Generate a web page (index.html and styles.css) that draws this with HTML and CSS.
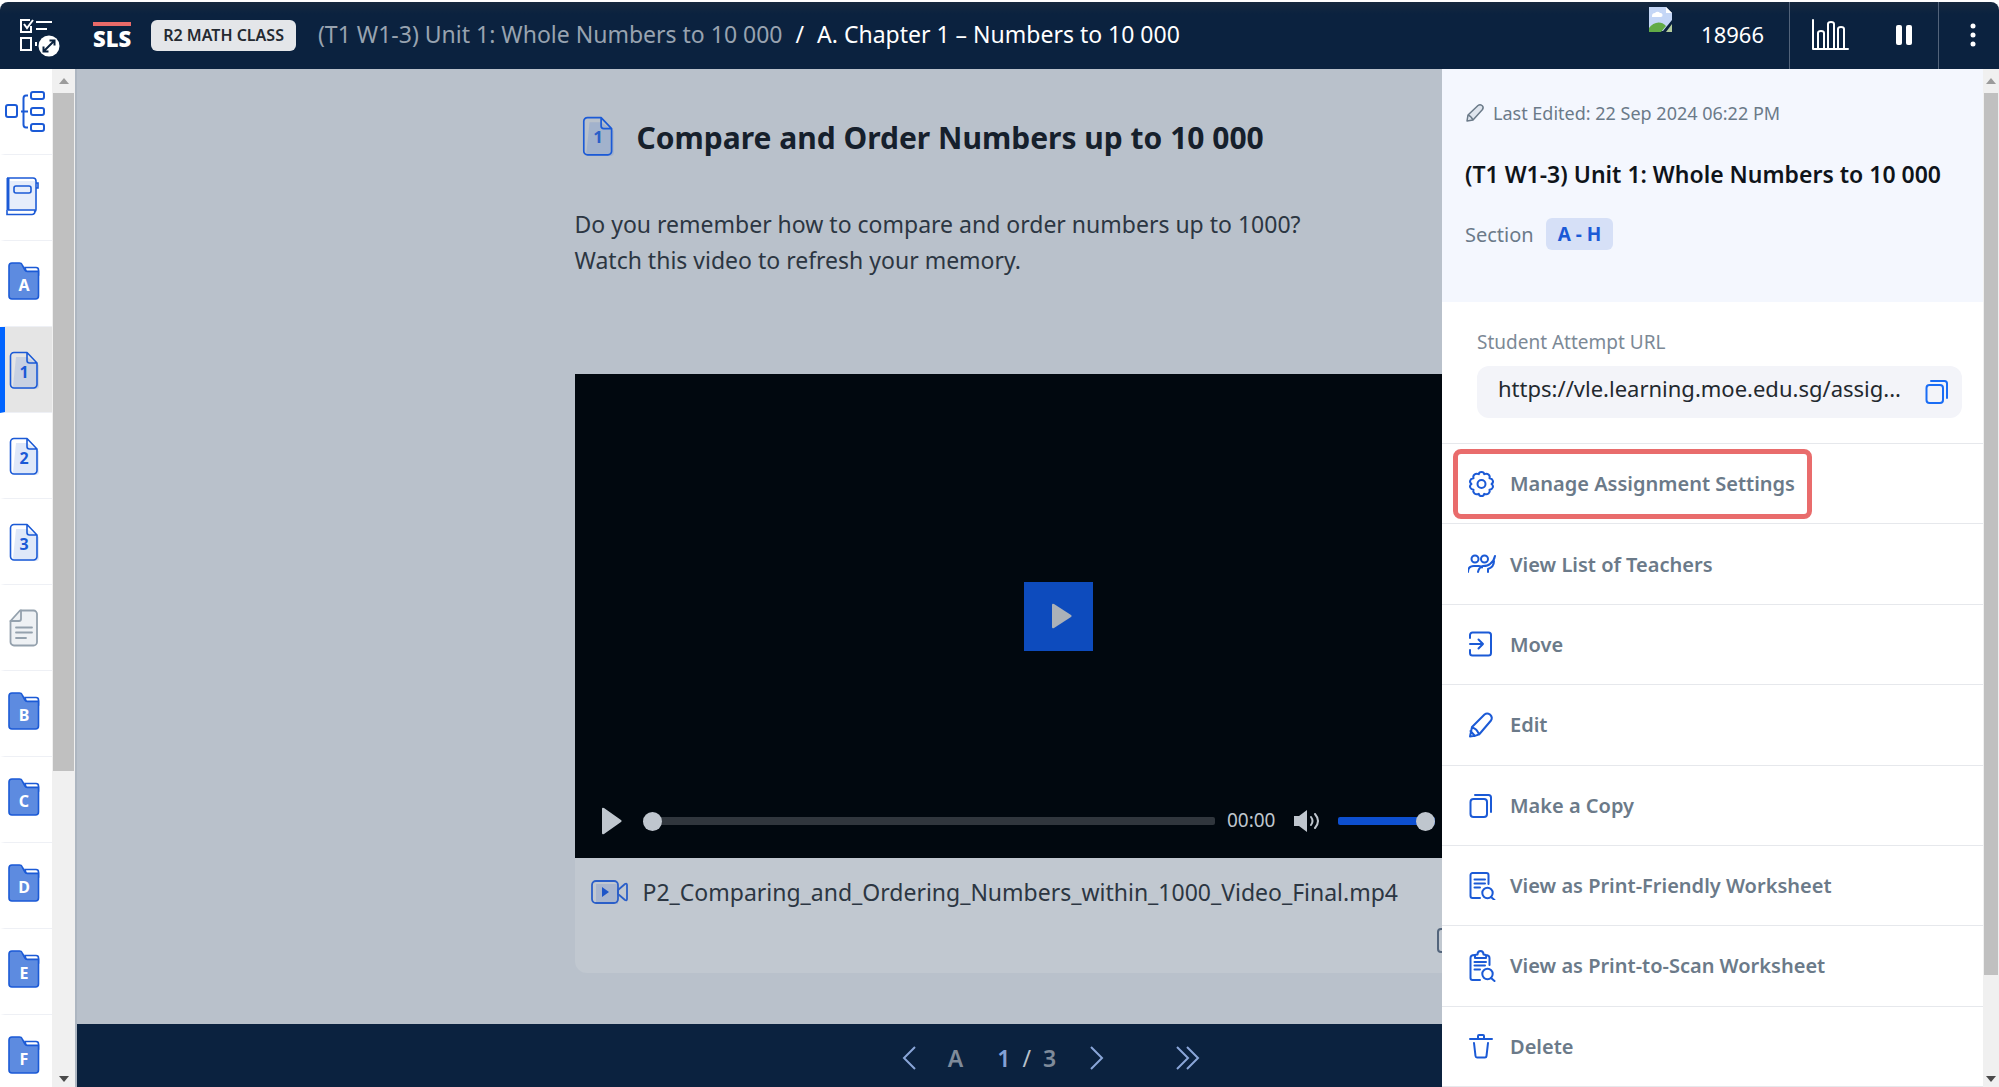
FILE: index.html
```html
<!DOCTYPE html>
<html lang="en">
<head>
<meta charset="utf-8">
<meta name="viewport" content="width=device-width, initial-scale=1">
<title>SLS – Compare and Order Numbers up to 10 000</title>
<link rel="stylesheet" href="styles.css">
</head>
<body>
<svg class="sprite" aria-hidden="true">
  <symbol id="folder" viewBox="0 0 32 38">
    <path d="M17 5.500h11a2.500 2.500 0 0 1 2.500 2.500v5H19z" fill="#fff" stroke="#1b5ad6" stroke-width="1.600"/>
    <path d="M1 4a3 3 0 0 1 3-3h7.500a3 3 0 0 1 2.700 1.800l2.600 5a3 3 0 0 0 2.500 1.600H30.500V34a3 3 0 0 1-3 3H4a3 3 0 0 1-3-3z" fill="#5d8be0" stroke="#1b5ad6" stroke-width="1.600"/>
  </symbol>
  <symbol id="page" viewBox="0 0 32 40">
    <path d="M7 6h11l12 8v21a3 3 0 0 1-3 3H7a3 3 0 0 1-3-3z" fill="#1b5ad6" fill-opacity=".14"/>
    <path d="M5 1.500h13L28 12v21.500a3.500 3.500 0 0 1-3.500 3.500H5a3.500 3.500 0 0 1-3.500-3.500V5A3.500 3.500 0 0 1 5 1.500zM18 2v7.500a2.500 2.500 0 0 0 2.500 2.500H28" fill="none" stroke="#1b5ad6" stroke-width="1.600" stroke-linejoin="round"/>
  </symbol>
  <symbol id="copy" viewBox="0 0 28 28">
    <rect x="2.500" y="8" width="16.500" height="18" rx="3"/><path d="M7 4h13.500a2.500 2.500 0 0 1 2.500 2.500V21"/>
  </symbol>
</svg>

<div class="app">
  <header class="topbar">
    <button class="bare menu" aria-label="Activity list">
      <svg width="40" height="42" viewBox="0 0 40 42" fill="none" stroke="#fff" stroke-width="2">
        <path d="M10 3H1v12h10V9M4 7l3 4 6-8M16 5h16M16 12h11M1 21h10v12H1zM16 25v4"/>
        <circle cx="29" cy="29" r="10.500" fill="#fff" stroke="none"/>
        <path d="M24 34l10-10M29.500 23.500H34.500V28.500M23.500 29.500V34.500H28.500" stroke="#0b223f"/>
      </svg>
    </button>
    <a class="logo" href="#">SLS</a>
    <span class="class-tag">R2 MATH CLASS</span>
    <nav class="crumbs" aria-label="Breadcrumb">
      <a href="#">(T1 W1-3) Unit 1: Whole Numbers to 10 000</a>
      <span>/</span>
      <span>A. Chapter 1 – Numbers to 10 000</span>
    </nav>
    <svg class="avatar" width="24" height="26" viewBox="0 0 24 26" aria-hidden="true">
      <path d="M0 0h17l6 6v7l-9 11H0z" fill="#c4d6f6"/>
      <path d="M3 9a3 3 0 0 1 3-3 3 3 0 0 1 5 0 2 2 0 0 1 1 4H3z" fill="#fff"/>
      <path d="M0 25v-4c4-6 12-8 17-2l-5 6z" fill="#62ab46"/>
      <path d="M23 17v8h-6z" fill="#b4cc9c"/><path d="M17 0v6h6z" fill="#fff"/>
    </svg>
    <span class="user-id">18966</span>
    <div class="tools">
      <button class="bare" aria-label="Monitor">
        <svg width="38" height="32" viewBox="0 0 38 32" fill="none" stroke="#fff" stroke-width="2" stroke-linejoin="round" stroke-linecap="round"><path d="M2 1v29h35M7 30V14q0-2 3-2t3 2v16M17 30V5q0-2 3-2t3 2v25M27 30V10q0-2 3-2t3 2v20"/></svg>
      </button>
      <button class="bare" aria-label="Pause">
        <svg width="18" height="22" viewBox="0 0 18 22" fill="#fff"><rect x="1" y="1" width="6" height="20" rx="2"/><rect x="11" y="1" width="6" height="20" rx="2"/></svg>
      </button>
    </div>
    <button class="bare more" aria-label="More options">
      <svg width="6" height="24" viewBox="0 0 6 24" fill="#fff"><circle cx="3" cy="3" r="2.500"/><circle cx="3" cy="12" r="2.500"/><circle cx="3" cy="21" r="2.500"/></svg>
    </button>
  </header>

  <div class="body">
    <nav class="rail" aria-label="Activities">
      <ul>
        <li class="tool"><a href="#" aria-label="Overview"><svg width="42" height="42" viewBox="1 0 42 42" fill="none" stroke="#1b5ad6" stroke-width="2"><rect x="2" y="15" width="11" height="12" rx="2"/><rect x="27" y="2" width="13" height="7" rx="2"/><rect x="27" y="18" width="13" height="7" rx="2"/><rect x="27" y="34" width="13" height="7" rx="2"/><path d="M24 5.500h-2q-2.500 0-2.500 3v26q0 3 2.500 3h2M17 21.500h7"/></svg></a></li>
        <li class="tool"><a href="#" aria-label="Journal"><svg width="36" height="42" viewBox="1 0 36 42" fill="none" stroke="#1b5ad6" stroke-width="1.600"><path d="M6 5h25v30H6z" fill="#e6edfb" stroke="none"/><path d="M3 2h26a3 3 0 0 1 3 3v28a3 3 0 0 1-2 3M4 34h27M3 34v4.500h25a3 3 0 0 0 3-3M32 7h2v5h-2"/><path d="M4 2v32" stroke-width="3"/><rect x="10" y="10" width="17" height="7" rx="2"/></svg></a></li>
        <li><a href="#"><svg width="32" height="38" viewBox="0 0 32 38"><use href="#folder"/><text class="on-folder" x="16" y="29">A</text></svg></a></li>
        <li class="page current"><a href="#" aria-current="page"><svg width="32" height="40" viewBox="0 0 32 40"><use href="#page"/><text class="on-page" x="15" y="27">1</text></svg></a></li>
        <li class="page"><a href="#"><svg width="32" height="40" viewBox="0 0 32 40"><use href="#page"/><text class="on-page" x="15" y="27">2</text></svg></a></li>
        <li class="page"><a href="#"><svg width="32" height="40" viewBox="0 0 32 40"><use href="#page"/><text class="on-page" x="15" y="27">3</text></svg></a></li>
        <li class="page"><a href="#" aria-label="Notes"><svg width="32" height="40" viewBox="0 0 32 40" fill="none" stroke="#94a1ad" stroke-width="1.800" stroke-linejoin="round" stroke-linecap="round"><path d="M11 1.500h13.500A3.500 3.500 0 0 1 28 5v28a3.500 3.500 0 0 1-3.500 3.500H5A3.500 3.500 0 0 1 1.500 33V12z" fill="#eef1f4"/><path d="M12 1.500V10a2 2 0 0 1-2 2H1.500M7 18.500h16M7 23.500h16M7 29h10"/></svg></a></li>
        <li><a href="#"><svg width="32" height="38" viewBox="0 0 32 38"><use href="#folder"/><text class="on-folder" x="16" y="29">B</text></svg></a></li>
        <li><a href="#"><svg width="32" height="38" viewBox="0 0 32 38"><use href="#folder"/><text class="on-folder" x="16" y="29">C</text></svg></a></li>
        <li><a href="#"><svg width="32" height="38" viewBox="0 0 32 38"><use href="#folder"/><text class="on-folder" x="16" y="29">D</text></svg></a></li>
        <li><a href="#"><svg width="32" height="38" viewBox="0 0 32 38"><use href="#folder"/><text class="on-folder" x="16" y="29">E</text></svg></a></li>
        <li><a href="#"><svg width="32" height="38" viewBox="0 0 32 38"><use href="#folder"/><text class="on-folder" x="16" y="29">F</text></svg></a></li>
      </ul>
      <div class="scrollbar" aria-hidden="true"><span class="up"></span><span class="thumb rail-thumb"></span><span class="down"></span></div>
    </nav>

    <main class="stage">
      <article class="lesson">
        <h1><svg width="36" height="42" viewBox="0 0 32 40"><use href="#page"/><text class="on-page" x="15" y="26">1</text></svg>Compare and Order Numbers up to 10 000</h1>
        <p>Do you remember how to compare and order numbers up to 1000?<br>Watch this video to refresh your memory.</p>
        <figure class="player">
          <div class="screen">
            <button class="big-play" aria-label="Play video"><svg width="22" height="26" viewBox="0 0 22 26"><path d="M1 2q0-2 2-1l17 11q1.500 1 0 2L3 25q-2 1-2-1z" fill="#abb1b8"/></svg></button>
            <div class="controls">
              <button class="bare play" aria-label="Play"><svg width="22" height="28" viewBox="0 0 22 28"><path d="M1 2q0-2 2-1l17 12q1.500 1 0 2L3 27q-2 1-2-1z" fill="#bfc6ce"/></svg></button>
              <input class="seek" type="range" value="0" aria-label="Seek">
              <span class="time">00:00</span>
              <button class="bare" aria-label="Mute"><svg width="26" height="22" viewBox="0 0 26 22" fill="none" stroke="#bfc6ce" stroke-width="2" stroke-linecap="round"><path d="M0 6h5l8-6v22l-8-6H0z" fill="#bfc6ce" stroke="none"/><path d="M17 7q3 4 0 8M21 4q6 7 0 14"/></svg></button>
              <input class="volume" type="range" value="100" aria-label="Volume">
            </div>
          </div>
          <figcaption>
            <div class="file"><svg width="38" height="28" viewBox="0 0 38 28" fill="none" stroke="#2b5fc8" stroke-width="1.800" stroke-linejoin="round"><path d="M5 6h22v20H5z" fill="#2b5fc8" fill-opacity=".16" stroke="none"/><rect x="1" y="3" width="26" height="22" rx="4"/><path d="M27 12l7-6q2-1 2 1v14q0 2-2 1l-7-6z"/><path d="M11 9v10l7-5z" fill="#1d55c8" stroke="none"/></svg>P2_Comparing_and_Ordering_Numbers_within_1000_Video_Final.mp4</div>
            <button class="expand" aria-label="Expand"></button>
          </figcaption>
        </figure>
      </article>
      <nav class="pager" aria-label="Pages">
        <a href="#" aria-label="Previous"><svg width="14" height="24" viewBox="0 0 14 24"><path d="M13 1L2 12l11 11"/></svg></a>
        <span class="group">A</span>
        <span class="count"><b>1</b><i>/</i>3</span>
        <a href="#" aria-label="Next"><svg width="14" height="24" viewBox="0 0 14 24"><path d="M1 1l11 11L1 23"/></svg></a>
        <a class="last" href="#" aria-label="Last"><svg width="24" height="24" viewBox="0 0 24 24"><path d="M1 1l11 11L1 23M11 1l11 11-11 11"/></svg></a>
      </nav>
    </main>

    <aside class="drawer">
      <div class="panel">
        <section class="summary">
          <div class="edited"><svg width="20" height="20" viewBox="0 0 20 20" fill="#dfe5ee" stroke="#6b7a89" stroke-width="1.500" stroke-linejoin="round"><path d="M2 18l1-6L13 2.500q2-1.500 4 0t.5 4L8 17z"/><path d="M3 12q3 1 5 5"/></svg>Last Edited: 22 Sep 2024 06:22 PM</div>
          <h2>(T1 W1-3) Unit 1: Whole Numbers to 10 000</h2>
          <div class="section-row">Section <span class="range">A - H</span></div>
        </section>
        <section class="url">
          <label for="attempt-url">Student Attempt URL</label>
          <div class="url-box">
            <input id="attempt-url" type="text" readonly value="https://vle.learning.moe.edu.sg/assig...">
            <button class="bare" aria-label="Copy URL"><svg class="line bright" width="28" height="28"><use href="#copy"/></svg></button>
          </div>
        </section>
        <ul class="actions">
          <li><button class="marked"><svg class="line" width="28" height="28" viewBox="0 0 28 28"><path d="M10.800 4.200Q11 2 13.500 2t2.700 2.200q2.500-1.200 4.300.3t1 3.800q2.500.2 3.300 2.200T23.500 14q2 1.500 1.300 3.500t-3.300 2.200q.8 2.300-1 3.800t-4.300.3Q16 26 13.500 26t-2.700-2.200q-2.500 1.200-4.300-.3t-1-3.800q-2.500-.2-3.300-2.200T3.500 14q-2-1.500-1.300-3.500t3.300-2.200q-.8-2.300 1-3.800t4.300-.3z"/><circle cx="13.500" cy="14" r="4"/></svg>Manage Assignment Settings</button></li>
          <li><button><svg class="line" width="28" height="28" viewBox="0 0 28 28"><circle cx="7" cy="9" r="3.500"/><circle cx="16.500" cy="9" r="3.500"/><path d="M0 22q0-6 6-6h5q2 0 3 1.500M10 22q1-5 5-6 5 0 7-2 4-3 5-8M20 22v-3q6-2 6-8"/></svg>View List of Teachers</button></li>
          <li><button><svg class="line" width="28" height="28" viewBox="0 0 28 28"><path d="M2 8V5a2.500 2.500 0 0 1 2.500-2.500h16A2.500 2.500 0 0 1 23 5v18a2.500 2.500 0 0 1-2.500 2.500h-16A2.500 2.500 0 0 1 2 23v-3M2 14h13M10.500 9.500L15 14l-4.500 4.500"/></svg>Move</button></li>
          <li><button><svg class="line" width="28" height="28" viewBox="0 0 28 28"><path d="M2 25.500L4 16 16.500 3.500q2.500-2 5.500 0 3 3 1 6L11.500 23q-3 2-9.500 2.500zM4 16.500q5 1 7 7M2.500 20l4.500 5"/></svg>Edit</button></li>
          <li><button><svg class="line" width="28" height="28"><use href="#copy"/></svg>Make a Copy</button></li>
          <li><button><svg class="line" width="28" height="28" viewBox="0 0 28 28"><path d="M12 26H4.500A2 2 0 0 1 2.500 24V3a2 2 0 0 1 2-2h14a2 2 0 0 1 2 2v9M6.500 7.500H17M6.500 11.500H17M6.500 15.500H12"/><circle cx="19.500" cy="21" r="5.200"/><path d="M23 25l3.500 3"/></svg>View as Print-Friendly Worksheet</button></li>
          <li><button><svg class="line" width="28" height="32" viewBox="0 -2 28 32"><path d="M12 28H4.500A2 2 0 0 1 2.500 26V6q0-3 4-3M17 3q4.500 0 4.500 3v7M7 6V3.500q0-1 2.500-1 0-3.500 3-3.500t3 3.500q2.500 0 2.500 1V6zM6.500 10H18M6.500 13.500H17M6.500 17.500H12"/><circle cx="19.500" cy="22" r="5.200"/><path d="M23 26l3.500 3"/></svg>View as Print-to-Scan Worksheet</button></li>
          <li><button><svg class="line" width="28" height="28" viewBox="0 0 28 28"><path d="M2 7h22M10 7V4q0-1 1-1h4q1 0 1 1v3M6 11l1.500 13q.2 1.500 1.500 1.500h8q1.300 0 1.500-1.500L20 11"/></svg>Delete</button></li>
        </ul>
      </div>
      <div class="scrollbar" aria-hidden="true"><span class="up"></span><span class="thumb drawer-thumb"></span><span class="down"></span></div>
    </aside>
  </div>
</div>
</body>
</html>
```
FILE: styles.css
```css
:root {
  --navy: #0b223f;
  --blue: #1b5ad6;
  --slate: #6b7a89;
}

* { box-sizing: border-box; }

body {
  margin: 0;
  background: #fff;
  color: #16202c;
  font-family: "Noto Sans", "Open Sans", sans-serif;
  font-size: 20px;
}

button, input { font: inherit; color: inherit; }
button { cursor: pointer; }
a { color: inherit; text-decoration: none; }
ul { list-style: none; margin: 0; padding: 0; }
svg { display: block; flex: none; }

.sprite { position: absolute; width: 0; height: 0; }
.bare { display: block; padding: 0; border: 0; background: none; }

.app {
  display: flex;
  flex-direction: column;
  height: 100vh;
  padding-top: 2px;
}

/* Top bar */
.topbar {
  display: flex;
  flex: none;
  align-items: center;
  height: 67px;
  padding-left: 20px;
  background: linear-gradient(#16293f, var(--navy) 12px);
  border-radius: 8px 8px 0 0;
  color: #fff;
  font-size: 22px;
  white-space: nowrap;
}
.menu { margin-top: 4px; }
.logo {
  margin: 0 20px 0 33px;
  border-top: 4px solid #ea6a68;
  font-size: 22px;
  font-weight: 900;
  line-height: 24px;
}
.class-tag {
  padding: 0 12px;
  border-radius: 6px;
  background: #e4e6e9;
  color: #242a31;
  font-size: 16px;
  font-weight: 600;
  line-height: 31px;
}
.crumbs {
  display: flex;
  gap: 13px;
  margin: 0 auto 0 22px;
  padding-bottom: 4px;
  font-size: 23px;
}
.crumbs a { color: #98a3b0; }
.avatar { align-self: flex-start; margin: 5px 28px 0 0; }
.user-id { margin-right: 25px; padding-bottom: 4px; }
.tools {
  display: flex;
  align-items: center;
  align-self: stretch;
  gap: 46px;
  padding: 0 25px 2px 21px;
  border: solid #52637a;
  border-width: 0 1px;
}
.more { padding: 0 23px 2px 31px; }

.body { display: flex; flex: 1; min-height: 0; position: relative; }

/* Left rail */
.rail { display: flex; flex: none; width: 77px; border-right: 2px solid #adb6c1; }
.rail ul { flex: 1; overflow: hidden; }
.rail li {
  height: 86px;
  border-bottom: 1px solid #eef0f5;
  border-left: 5px solid transparent;
}
.rail a { display: grid; place-items: center start; height: 80px; padding-left: 3px; }
.rail .tool a { height: 84px; padding-left: 0; }
.rail .page a { height: 87px; padding-left: 4px; }
.rail .current { background: #e5e5e5; border-left-color: #0064ff; }
.on-folder, .on-page { font-weight: 700; font-size: 16px; text-anchor: middle; }
.on-folder { fill: #fff; }
.on-page { fill: var(--blue); }

.scrollbar {
  display: flex;
  flex: none;
  flex-direction: column;
  width: 23px;
  padding: 0 1px;
  background: #f0f0f0;
}
.up, .down { flex: none; height: 24px; display: grid; place-items: center; }
.up::after, .down::after {
  content: "";
  border: 5px solid transparent;
}
.up::after { border-top-width: 0; border-bottom: 6px solid #9b9b9b; }
.down { margin-top: auto; height: 16px; }
.down::after { border-bottom-width: 0; border-top: 6px solid #4a4a4a; }
.thumb { background: #c0c0c0; }
.rail-thumb { height: calc(67% - 4px); }
.drawer-thumb { height: calc(87% - 4px); }

/* Lesson */
.stage {
  display: flex;
  flex: 1;
  flex-direction: column;
  min-width: 0;
  overflow: hidden;
  background: #b9c1cb;
}
.lesson {
  flex: 1;
  align-self: center;
  width: 968px;
  min-height: 0;
  margin-left: 41px;
  padding-top: 45px;
}
.lesson h1 {
  display: flex;
  align-items: center;
  gap: 20px;
  height: 46px;
  margin: 0 0 40px 6px;
  font-size: 30px;
  font-weight: 700;
}
.lesson p {
  margin: 0 0 96px;
  padding-top: 6px;
  color: #2c3642;
  font-size: 23px;
  line-height: 36px;
}
.lesson .on-page { fill: #2b5fc8; }
.player { margin: 0; overflow: hidden; border-radius: 0 0 12px 12px; background: #c1c8d0; }
.screen {
  display: grid;
  grid-template-rows: 1fr auto 1fr;
  aspect-ratio: 2 / 1;
  background: #01080f;
}
.big-play {
  grid-row: 2;
  display: grid;
  place-items: center;
  justify-self: center;
  width: 69px;
  height: 69px;
  padding: 0 0 0 6px;
  border: 0;
  background: #0d4bbd;
}
.controls {
  display: flex;
  grid-row: 3;
  align-items: center;
  align-self: end;
  gap: 18px;
  padding: 0 108px 23px 26px;
  color: #bfc6ce;
  font-size: 19px;
}
.controls input { appearance: none; height: 8px; margin: 0; border-radius: 2px; background: #30363d; }
.controls input::-webkit-slider-thumb {
  appearance: none;
  width: 19px;
  height: 19px;
  border-radius: 50%;
  background: #bfc6ce;
}
.controls .play { margin-right: 2px; }
.controls .seek { flex: 1; min-width: 0; }
.controls .time { margin-left: -6px; padding-bottom: 2px; }
.controls .volume { width: 97px; background: #0d4fcf; }
figcaption { display: flex; flex-direction: column; height: 115px; padding: 16px; }
.file { display: flex; align-items: center; gap: 14px; height: 36px; font-size: 23px; color: #2c3642; }
.expand {
  align-self: flex-end;
  width: 80px;
  height: 25px;
  margin: 18px 10px 0 0;
  border: 2px solid #53657c;
  border-radius: 4px;
  background: none;
}

.pager {
  display: flex;
  flex: none;
  align-items: center;
  justify-content: center;
  height: 63px;
  padding: 4px 0 0 26px;
  background: var(--navy);
  color: #7f8b9a;
  font-size: 23px;
  font-weight: 600;
}
.pager svg { fill: none; stroke: #8aa6d8; stroke-width: 2; }
.group { margin: 0 34px 0 32px; }
.count { display: flex; gap: 12px; margin-right: 34px; }
.count b { color: #84a1d6; font-weight: 600; }
.count i { font-style: normal; font-weight: 400; color: #b9c1cb; }
.last { margin-left: 72px; }

/* Settings drawer, laid over the lesson */
.drawer { position: absolute; top: 0; right: 0; bottom: 0; display: flex; width: 557px; background: #fff; }
.drawer .scrollbar { width: 16px; }
.panel { display: flex; flex: 1; flex-direction: column; min-width: 0; overflow: hidden; }
.summary { height: 233px; padding: 30px 23px; background: #f4f7fe; color: var(--slate); font-size: 18px; }
.edited { display: flex; align-items: center; gap: 8px; height: 28px; }
.summary h2 { margin: 31px 0 28px; color: #0f141a; font-size: 23px; font-weight: 600; line-height: 32px; white-space: nowrap; }
.section-row { display: flex; align-items: center; gap: 12px; font-size: 20px; }
.range {
  padding: 0 12px;
  border-radius: 6px;
  background: #d6e0f7;
  color: var(--blue);
  font-size: 19px;
  font-weight: 700;
  line-height: 32px;
}
.url { height: 142px; padding: 26px 21px 0 35px; border-bottom: 1px solid #e6e8ec; }
.url label { display: block; color: #7c8996; font-size: 19px; line-height: 28px; }
.url-box {
  display: flex;
  align-items: center;
  height: 52px;
  margin-top: 10px;
  padding: 0 10px 2px 21px;
  border-radius: 12px;
  background: #f3f4f9;
}
.url-box input {
  flex: 1;
  min-width: 0;
  padding: 0 0 6px;
  border: 0;
  background: none;
  color: #23292f;
  font-size: 22px;
}
.line { fill: none; stroke: var(--blue); stroke-width: 2; stroke-linecap: round; stroke-linejoin: round; }
.bright { stroke: #1a6df5; }
.actions { display: flex; flex: 1; flex-direction: column; }
.actions li {
  display: flex;
  flex: 1;
  align-items: center;
  min-height: 80px;
  padding-left: 11px;
  border-bottom: 1px solid #e6e8ec;
}
.actions button {
  display: flex;
  align-items: center;
  gap: 14px;
  height: 70px;
  padding: 0 12px 0 10px;
  border: 5px solid transparent;
  border-radius: 8px;
  background: none;
  color: var(--slate);
  font-size: 20px;
  font-weight: 600;
  white-space: nowrap;
}
.actions .marked { border-color: #e96c6c; }
```
